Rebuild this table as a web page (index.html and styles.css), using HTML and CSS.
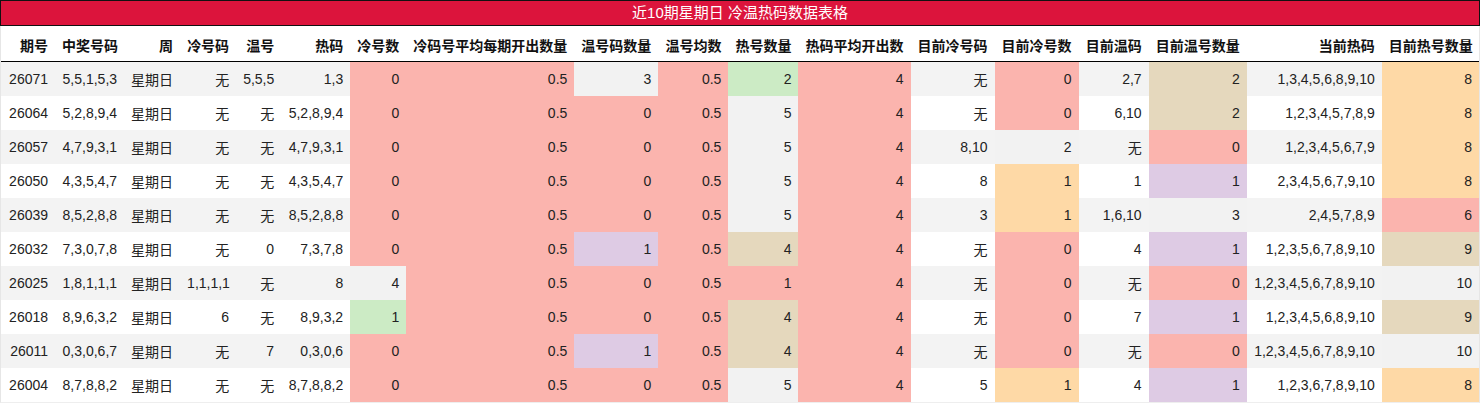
FILE: index.html
```html
<!DOCTYPE html>
<html lang="zh">
<head>
<meta charset="utf-8">
<title>近10期星期日 冷温热码数据表格</title>
<link rel="stylesheet" href="styles.css">
</head>
<body>
<div class="title">近10期星期日 冷温热码数据表格</div>
<div class="wrap">
<table class="data">
<colgroup>
<col class="w54"><col class="w69"><col class="w56"><col class="w56"><col class="w45"><col class="w69">
<col class="w56"><col class="w168"><col class="w84"><col class="w70"><col class="w70"><col class="w112">
<col class="w84"><col class="w84"><col class="w70"><col class="w98"><col class="w135"><col class="w97">
</colgroup>
<thead>
<tr>
<th>期号</th><th>中奖号码</th><th>周</th><th>冷号码</th><th>温号</th><th>热码</th><th>冷号数</th><th>冷码号平均每期开出数量</th><th>温号码数量</th><th>温号均数</th><th>热号数量</th><th>热码平均开出数</th><th>目前冷号码</th><th>目前冷号数</th><th>目前温码</th><th>目前温号数量</th><th>当前热码</th><th>目前热号数量</th>
</tr>
</thead>
<tbody>
<tr><td>26071</td><td>5,5,1,5,3</td><td>星期日</td><td>无</td><td>5,5,5</td><td>1,3</td><td class="p">0</td><td class="p">0.5</td><td class="n">3</td><td class="p">0.5</td><td class="g">2</td><td class="p">4</td><td>无</td><td class="p">0</td><td>2,7</td><td class="t">2</td><td>1,3,4,5,6,8,9,10</td><td class="o">8</td></tr>
<tr><td>26064</td><td>5,2,8,9,4</td><td>星期日</td><td>无</td><td>无</td><td>5,2,8,9,4</td><td class="p">0</td><td class="p">0.5</td><td class="p">0</td><td class="p">0.5</td><td class="n">5</td><td class="p">4</td><td>无</td><td class="p">0</td><td>6,10</td><td class="t">2</td><td>1,2,3,4,5,7,8,9</td><td class="o">8</td></tr>
<tr><td>26057</td><td>4,7,9,3,1</td><td>星期日</td><td>无</td><td>无</td><td>4,7,9,3,1</td><td class="p">0</td><td class="p">0.5</td><td class="p">0</td><td class="p">0.5</td><td class="n">5</td><td class="p">4</td><td>8,10</td><td class="n">2</td><td>无</td><td class="p">0</td><td>1,2,3,4,5,6,7,9</td><td class="o">8</td></tr>
<tr><td>26050</td><td>4,3,5,4,7</td><td>星期日</td><td>无</td><td>无</td><td>4,3,5,4,7</td><td class="p">0</td><td class="p">0.5</td><td class="p">0</td><td class="p">0.5</td><td class="n">5</td><td class="p">4</td><td>8</td><td class="o">1</td><td>1</td><td class="l">1</td><td>2,3,4,5,6,7,9,10</td><td class="o">8</td></tr>
<tr><td>26039</td><td>8,5,2,8,8</td><td>星期日</td><td>无</td><td>无</td><td>8,5,2,8,8</td><td class="p">0</td><td class="p">0.5</td><td class="p">0</td><td class="p">0.5</td><td class="n">5</td><td class="p">4</td><td>3</td><td class="o">1</td><td>1,6,10</td><td class="n">3</td><td>2,4,5,7,8,9</td><td class="p">6</td></tr>
<tr><td>26032</td><td>7,3,0,7,8</td><td>星期日</td><td>无</td><td>0</td><td>7,3,7,8</td><td class="p">0</td><td class="p">0.5</td><td class="l">1</td><td class="p">0.5</td><td class="t">4</td><td class="p">4</td><td>无</td><td class="p">0</td><td>4</td><td class="l">1</td><td>1,2,3,5,6,7,8,9,10</td><td class="t">9</td></tr>
<tr><td>26025</td><td>1,8,1,1,1</td><td>星期日</td><td>1,1,1,1</td><td>无</td><td>8</td><td class="n">4</td><td class="p">0.5</td><td class="p">0</td><td class="p">0.5</td><td class="p">1</td><td class="p">4</td><td>无</td><td class="p">0</td><td>无</td><td class="p">0</td><td>1,2,3,4,5,6,7,8,9,10</td><td class="n">10</td></tr>
<tr><td>26018</td><td>8,9,6,3,2</td><td>星期日</td><td>6</td><td>无</td><td>8,9,3,2</td><td class="g">1</td><td class="p">0.5</td><td class="p">0</td><td class="p">0.5</td><td class="t">4</td><td class="p">4</td><td>无</td><td class="p">0</td><td>7</td><td class="l">1</td><td>1,2,3,4,5,6,8,9,10</td><td class="t">9</td></tr>
<tr><td>26011</td><td>0,3,0,6,7</td><td>星期日</td><td>无</td><td>7</td><td>0,3,0,6</td><td class="p">0</td><td class="p">0.5</td><td class="l">1</td><td class="p">0.5</td><td class="t">4</td><td class="p">4</td><td>无</td><td class="p">0</td><td>无</td><td class="p">0</td><td>1,2,3,4,5,6,7,8,9,10</td><td class="n">10</td></tr>
<tr><td>26004</td><td>8,7,8,8,2</td><td>星期日</td><td>无</td><td>无</td><td>8,7,8,8,2</td><td class="p">0</td><td class="p">0.5</td><td class="p">0</td><td class="p">0.5</td><td class="n">5</td><td class="p">4</td><td>5</td><td class="o">1</td><td>4</td><td class="l">1</td><td>1,2,3,6,7,8,9,10</td><td class="o">8</td></tr>
</tbody>
</table>
</div>
</body>
</html>
```

FILE: styles.css
```css
html, body {
  margin: 0;
  padding: 0;
  background: #ffffff;
}

body {
  width: 1480px;
  font-family: "Liberation Sans", "Noto Sans CJK SC", sans-serif;
  font-size: 14px;
  color: #222222;
}

.title {
  height: 24px;
  line-height: 24px;
  border: 1px solid #111111;
  background: #dc143c;
  color: #ffffff;
  text-align: center;
  font-size: 15px;
}

.wrap {
  border-left: 1px solid #e6e6e6;
  border-right: 1px solid #e6e6e6;
  border-bottom: 1px solid #eeeeee;
}

.data {
  width: 100%;
  table-layout: fixed;
  border-collapse: separate;
  border-spacing: 0;
}

.data th,
.data td {
  padding: 0 7px;
  text-align: right;
  white-space: nowrap;
  overflow: hidden;
}

.data th {
  height: 35px;
  box-sizing: border-box;
  padding-top: 3px;
  font-weight: bold;
  color: #111111;
  background: #ffffff;
  border-bottom: 1px solid #000000;
}

.data thead tr {
  height: 36px;
}

.data th {
  height: 36px;
}

.data td {
  height: 34px;
  box-sizing: border-box;
}

.data tbody tr:nth-child(odd) {
  background: #f3f3f3;
}

.data tbody tr:nth-child(even) {
  background: #ffffff;
}

.data td.p { background: #fbb4ae; }
.data td.g { background: #ccebc5; }
.data td.l { background: #decbe4; }
.data td.o { background: #fed9a6; }
.data td.t { background: #e5d8bd; }
.data td.n { background: #f2f2f2; }

.w45 { width: 45px; }
.w54 { width: 54px; }
.w56 { width: 56px; }
.w69 { width: 69px; }
.w70 { width: 70px; }
.w84 { width: 84px; }
.w97 { width: 97px; }
.w98 { width: 98px; }
.w112 { width: 112px; }
.w135 { width: 135px; }
.w168 { width: 168px; }
```
